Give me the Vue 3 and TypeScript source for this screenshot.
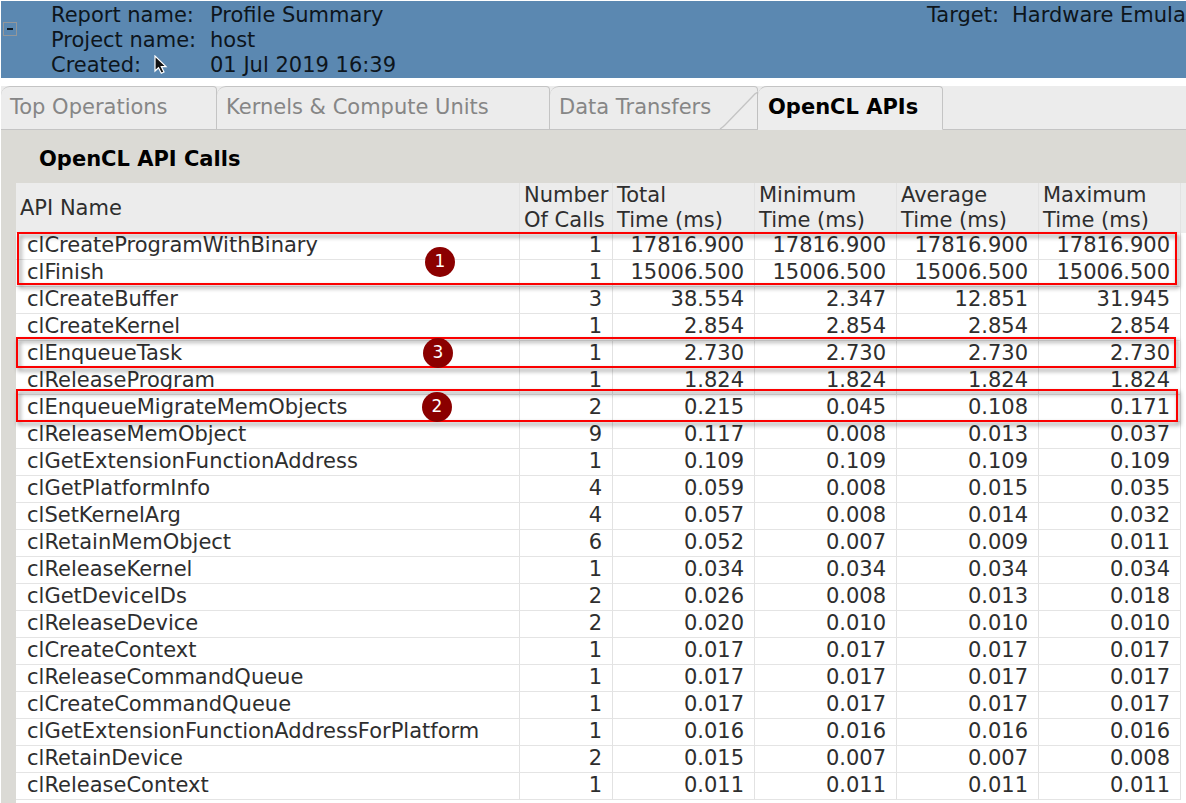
<script setup lang="ts">
interface ApiCall {
  name: string
  calls: number
  times: string[]
}

const tabs: { label: string; size: string; active?: boolean }[] = [
  { label: 'Top Operations', size: 'tab-first' },
  { label: 'Kernels & Compute Units', size: 'tab-wide' },
  { label: 'Data Transfers', size: 'tab-medium' },
  { label: 'OpenCL APIs', size: 'tab-active', active: true },
]

const timeColumns = ['Total', 'Minimum', 'Average', 'Maximum']

const call = (name: string, calls: number, ...times: string[]): ApiCall => ({ name, calls, times })

const rows: ApiCall[] = [
  call('clCreateProgramWithBinary', 1, '17816.900', '17816.900', '17816.900', '17816.900'),
  call('clFinish', 1, '15006.500', '15006.500', '15006.500', '15006.500'),
  call('clCreateBuffer', 3, '38.554', '2.347', '12.851', '31.945'),
  call('clCreateKernel', 1, '2.854', '2.854', '2.854', '2.854'),
  call('clEnqueueTask', 1, '2.730', '2.730', '2.730', '2.730'),
  call('clReleaseProgram', 1, '1.824', '1.824', '1.824', '1.824'),
  call('clEnqueueMigrateMemObjects', 2, '0.215', '0.045', '0.108', '0.171'),
  call('clReleaseMemObject', 9, '0.117', '0.008', '0.013', '0.037'),
  call('clGetExtensionFunctionAddress', 1, '0.109', '0.109', '0.109', '0.109'),
  call('clGetPlatformInfo', 4, '0.059', '0.008', '0.015', '0.035'),
  call('clSetKernelArg', 4, '0.057', '0.008', '0.014', '0.032'),
  call('clRetainMemObject', 6, '0.052', '0.007', '0.009', '0.011'),
  call('clReleaseKernel', 1, '0.034', '0.034', '0.034', '0.034'),
  call('clGetDeviceIDs', 2, '0.026', '0.008', '0.013', '0.018'),
  call('clReleaseDevice', 2, '0.020', '0.010', '0.010', '0.010'),
  call('clCreateContext', 1, '0.017', '0.017', '0.017', '0.017'),
  call('clReleaseCommandQueue', 1, '0.017', '0.017', '0.017', '0.017'),
  call('clCreateCommandQueue', 1, '0.017', '0.017', '0.017', '0.017'),
  call('clGetExtensionFunctionAddressForPlatform', 1, '0.016', '0.016', '0.016', '0.016'),
  call('clRetainDevice', 2, '0.015', '0.007', '0.007', '0.008'),
  call('clReleaseContext', 1, '0.011', '0.011', '0.011', '0.011'),
]
</script>

<template>
  <div class="page">
    <header class="report">
      <button class="collapse" type="button" aria-label="Collapse report details"></button>
      <dl class="facts">
        <dt>Report name:</dt><dd>Profile Summary</dd>
        <dt>Project name:</dt><dd>host</dd>
        <dt>Created:</dt><dd>01 Jul 2019 16:39</dd>
      </dl>
      <dl class="target">
        <dt>Target:</dt><dd>Hardware Emula</dd>
      </dl>
      <svg class="cursor" width="14" height="20" viewBox="0 0 14 20" aria-hidden="true">
        <path d="M1 1V16L4.5 12.7L7.3 18.3L10 17L7.3 11.6H12Z" fill="#111" stroke="#fff" stroke-width="1.2" />
      </svg>
    </header>

    <nav class="tabs" role="tablist">
      <button
        v-for="tab in tabs"
        :key="tab.label"
        type="button"
        role="tab"
        class="tab"
        :class="tab.size"
        :aria-selected="!!tab.active"
      >
        <svg v-if="tab.active" class="slope" width="40" height="42" viewBox="0 0 40 42" aria-hidden="true">
          <path d="M4 42L37 8Q39 5 40 4V42Z" fill="#ededed" />
          <path d="M2 42Q5 40 7 38L34 10Q37 6 40 5" fill="none" stroke="#c4c4c4" stroke-width="1.3" />
          <path d="M39.5 5V42" stroke="#c0c0c0" />
        </svg>
        {{ tab.label }}
      </button>
      <span class="tab-rest"></span>
    </nav>

    <main class="panel">
      <h1>OpenCL API Calls</h1>
      <div class="sheet">
        <table>
          <colgroup>
            <col />
            <col class="col-calls" />
            <col v-for="column in timeColumns" :key="column" class="col-time" />
          </colgroup>
          <thead>
            <tr>
              <th scope="col">API Name</th>
              <th scope="col">Number<br />Of Calls</th>
              <th v-for="column in timeColumns" :key="column" scope="col">{{ column }}<br />Time (ms)</th>
            </tr>
          </thead>
          <tbody>
            <tr v-for="row in rows" :key="row.name">
              <td class="name">{{ row.name }}</td>
              <td>{{ row.calls }}</td>
              <td v-for="(time, index) in row.times" :key="index">{{ time }}</td>
            </tr>
          </tbody>
        </table>
        <div class="frame frame-one"></div>
        <div class="frame frame-three"></div>
        <div class="frame frame-two"></div>
        <span class="badge badge-one">1</span>
        <span class="badge badge-three">3</span>
        <span class="badge badge-two">2</span>
      </div>
    </main>
  </div>
</template>

<style>
body {
  margin: 0;
  background: #fff;
}
</style>

<style scoped>
.page {
  box-sizing: border-box;
  min-height: 100vh;
  padding: 1px 0 0 1px;
  display: flex;
  flex-direction: column;
  overflow: hidden;
  font-family: "DejaVu Sans", sans-serif;
  font-size: 21px;
  color: #2e2e2e;
}

.report {
  position: relative;
  display: flex;
  justify-content: space-between;
  min-height: 77px;
  background: #5b88b1;
  color: #0d151c;
  overflow: hidden;
}

.collapse {
  box-sizing: border-box;
  flex: none;
  display: flex;
  align-items: center;
  justify-content: center;
  width: 14px;
  height: 14px;
  margin: 21px 32px 0 2px;
  padding: 0;
  border: 1px solid #93979a;
  background: transparent;
}

.collapse::before {
  content: "";
  width: 6px;
  height: 2px;
  background: #111a22;
}

dl,
dd {
  margin: 0;
}

.facts,
.target {
  padding: 2px 0 0 2px;
  line-height: 25px;
}

.facts {
  flex: 1;
  display: grid;
  grid-template-columns: 159px 1fr;
  align-content: start;
}

.target {
  flex: none;
  display: flex;
  width: 259px;
  white-space: nowrap;
}

.target dt {
  width: 85px;
  flex: none;
}

.cursor {
  position: absolute;
  left: 153px;
  top: 54px;
}

.tabs {
  display: flex;
  height: 44px;
  margin-top: 8px;
  background: #ececec;
}

.tab {
  position: relative;
  box-sizing: border-box;
  flex: none;
  margin: 0;
  padding: 0 0 2px 9px;
  border: 0 solid #c4c4c4;
  border-width: 1px 1px 1px 0;
  border-radius: 9px 4px 0 0;
  background: #ececec;
  font: inherit;
  line-height: 25px;
  color: #868686;
  text-align: left;
  white-space: nowrap;
}

.tab-first { width: 216px; }
.tab-wide { width: 333px; }
.tab-medium { width: 208px; }

.tab-active {
  width: 185px;
  padding-left: 10px;
  border-bottom-color: #ededed;
  background: #ededed;
  font-weight: bold;
  color: #000;
}

.slope {
  position: absolute;
  left: -40px;
  top: 0;
}

.tab-rest {
  flex: 1;
  border-bottom: 1px solid #c4c4c4;
}

.panel {
  flex: 1;
  display: flex;
  flex-direction: column;
  padding-left: 15px;
  background: #dbdad5;
}

h1 {
  margin: 0;
  padding: 17px 0 11px 23px;
  font-size: 21px;
  line-height: 25px;
  color: #000;
}

.sheet {
  position: relative;
  flex: 1;
  padding-right: 5px;
  background: linear-gradient(#ececec 50px, #fff 50px);
}

table {
  width: 100%;
  table-layout: fixed;
  border-collapse: separate;
  border-spacing: 0;
}

.col-calls { width: 93px; }
.col-time { width: 142px; }

th,
td {
  box-sizing: border-box;
  white-space: nowrap;
  border-right: 1px solid #e2e2e2;
}

th {
  height: 50px;
  padding: 0 0 0 4px;
  font-weight: normal;
  line-height: 25px;
  text-align: left;
}

td {
  height: 27px;
  padding: 0 10px 2px 0;
  border-bottom: 1px solid #e4e4e4;
  line-height: 24px;
  text-align: right;
}

td.name {
  padding: 0 0 2px 11px;
  text-align: left;
}

.frame {
  position: absolute;
  box-sizing: border-box;
  border: 2px solid #fb0000;
  filter: drop-shadow(2px 3px 2px rgba(0, 0, 0, 0.5));
}

.frame-one {
  left: 1px;
  right: 9px;
  top: 49px;
  height: 53px;
}

.frame-three {
  left: 0;
  right: 10px;
  top: 154px;
  height: 31px;
}

.frame-two {
  left: 0;
  right: 8px;
  top: 206px;
  height: 33px;
}

.badge {
  position: absolute;
  width: 30px;
  height: 30px;
  border-radius: 50%;
  background: #8b0000;
  color: #fff;
  font-size: 17px;
  line-height: 29px;
  text-align: center;
}

.badge-one { left: 409px; top: 64px; }
.badge-three { left: 407px; top: 155px; }
.badge-two { left: 406px; top: 209px; }
</style>
